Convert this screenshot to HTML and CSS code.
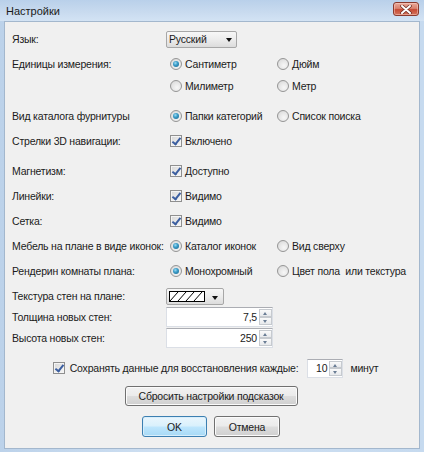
FILE: index.html
```html
<!DOCTYPE html>
<html lang="ru">
<head>
<meta charset="utf-8">
<title>Настройки</title>
<link rel="stylesheet" href="styles.css">
</head>
<body>
<div class="window">
  <div class="titlebar">
    <span class="title">Настройки</span>
    <button class="close" aria-label="Закрыть">
      <svg width="12" height="9" viewBox="0 0 12 9">
        <path d="M2 1 L10 8 M10 1 L2 8" stroke="#6b2a22" stroke-width="3.4" stroke-linecap="round"/>
        <path d="M2 1 L10 8 M10 1 L2 8" stroke="#ffffff" stroke-width="2" stroke-linecap="round"/>
      </svg>
    </button>
  </div>

  <div class="content">
    <div class="row">
      <span class="label">Язык:</span>
      <div class="combo lang">
        <span class="combo-text">Русский</span>
        <i class="arrow"></i>
      </div>
    </div>

    <div class="row">
      <span class="label">Единицы измерения:</span>
      <label class="opt"><span class="radio on"></span>Сантиметр</label>
      <label class="opt"><span class="radio"></span>Дюйм</label>
    </div>
    <div class="row sub">
      <span class="label"></span>
      <label class="opt"><span class="radio"></span>Милиметр</label>
      <label class="opt"><span class="radio"></span>Метр</label>
    </div>

    <div class="row group">
      <span class="label">Вид каталога фурнитуры</span>
      <label class="opt"><span class="radio on"></span>Папки категорий</label>
      <label class="opt"><span class="radio"></span>Список поиска</label>
    </div>
    <div class="row">
      <span class="label">Стрелки 3D навигации:</span>
      <label class="opt"><span class="check on"></span>Включено</label>
    </div>

    <div class="row group">
      <span class="label">Магнетизм:</span>
      <label class="opt"><span class="check on"></span>Доступно</label>
    </div>
    <div class="row">
      <span class="label">Линейки:</span>
      <label class="opt"><span class="check on"></span>Видимо</label>
    </div>
    <div class="row">
      <span class="label">Сетка:</span>
      <label class="opt"><span class="check on"></span>Видимо</label>
    </div>
    <div class="row">
      <span class="label">Мебель на плане в виде иконок:</span>
      <label class="opt"><span class="radio on"></span>Каталог иконок</label>
      <label class="opt"><span class="radio"></span>Вид сверху</label>
    </div>
    <div class="row">
      <span class="label">Рендерин комнаты плана:</span>
      <label class="opt"><span class="radio on"></span>Монохромный</label>
      <label class="opt"><span class="radio"></span>Цвет пола&nbsp; или текстура</label>
    </div>
    <div class="row">
      <span class="label">Текстура стен на плане:</span>
      <div class="combo texture">
        <svg class="hatch" width="36" height="11" viewBox="0 0 36 11">
          <rect x="0.5" y="0.5" width="35" height="10" fill="#fff" stroke="#000"/>
          <path d="M1 10 L9 1 M9 10 L17 1 M17 10 L25 1 M25 10 L33 1" stroke="#000" stroke-width="1"/>
        </svg>
        <i class="arrow"></i>
      </div>
    </div>
    <div class="row field">
      <span class="label">Толщина новых стен:</span>
      <div class="spin wide">
        <span class="spin-value">7,5</span>
        <span class="spin-buttons"><i class="up"></i><i class="down"></i></span>
      </div>
    </div>
    <div class="row field">
      <span class="label">Высота новых стен:</span>
      <div class="spin wide">
        <span class="spin-value">250</span>
        <span class="spin-buttons"><i class="up"></i><i class="down"></i></span>
      </div>
    </div>

    <div class="row group autosave">
      <label class="opt"><span class="check on"></span>Сохранять данные для восстановления каждые:</label>
      <div class="spin small">
        <span class="spin-value">10</span>
        <span class="spin-buttons"><i class="up"></i><i class="down"></i></span>
      </div>
      <span class="unit">минут</span>
    </div>

    <div class="actions">
      <button class="btn reset">Сбросить настройки подсказок</button>
    </div>
    <div class="actions pair">
      <button class="btn default">OK</button>
      <button class="btn">Отмена</button>
    </div>
  </div>
</div>
</body>
</html>
```

FILE: styles.css
```css
* {
  box-sizing: border-box;
}

html, body {
  margin: 0;
  padding: 0;
}

body {
  font-family: "Liberation Sans", Arial, sans-serif;
  font-size: 10.5px;
  letter-spacing: -0.2px;
  color: #1b1b1b;
  background: #c9dcf0;
}

.window {
  width: 424px;
  height: 452px;
  display: flex;
  flex-direction: column;
  background: linear-gradient(90deg, #bcd2ea, #cfe0f2 40%, #c6daef);
}

/* caption */
.titlebar {
  height: 21px;
  flex: none;
  display: flex;
  align-items: center;
  padding: 0 5px 0 6px;
  background: linear-gradient(180deg, #b9d0ea 0%, #c9dbef 60%, #d3e3f4 100%);
}

.title {
  flex: 1;
  font-family: "Liberation Sans", Arial, sans-serif;
  font-size: 11px;
  letter-spacing: 0;
  color: #1a1a1a;
  padding-top: 1px;
}

.close {
  width: 26px;
  height: 14px;
  margin-top: -3px;
  padding: 0;
  border: 1px solid #8a3a2e;
  border-radius: 3px;
  display: flex;
  align-items: center;
  justify-content: center;
  background: linear-gradient(180deg, #e9a99a 0%, #d9826f 45%, #c74a34 55%, #d3745c 100%);
  box-shadow: inset 0 0 0 1px rgba(255, 220, 210, 0.45);
}

/* client area */
.content {
  flex: 1;
  margin: 0 4px 3px 4px;
  border: 1px solid #a3b7cd;
  background: #f0f0f0;
  padding: 7px 0 0 7px;
  display: flex;
  flex-direction: column;
}

.row {
  height: 20px;
  display: flex;
  align-items: center;
  margin-top: 5px;
  white-space: nowrap;
}

.row:first-child {
  margin-top: 0;
}

.row.sub {
  margin-top: 2px;
}

.row.group {
  margin-top: 10px;
}

.row.field {
  margin-top: 1px;
}

.label {
  width: 154px;
  flex: none;
}

.opt {
  display: flex;
  align-items: center;
  gap: 3px;
  margin-left: 4px;
  width: 107px;
  flex: none;
}

.opt + .opt {
  margin-left: 0;
  width: auto;
}

/* radio button */
.radio {
  width: 12px;
  height: 12px;
  flex: none;
  border-radius: 50%;
  border: 1px solid #959595;
  background: radial-gradient(circle at 60% 65%, #f7f7f7 0%, #e3e3e3 60%, #cfcfcf 100%);
  position: relative;
}

.radio.on::after {
  content: "";
  position: absolute;
  left: 2px;
  top: 2px;
  width: 6px;
  height: 6px;
  border-radius: 50%;
  background: radial-gradient(circle at 40% 35%, #9fdcf3 0%, #3a9cc8 40%, #19628a 100%);
}

/* check box */
.check {
  width: 12px;
  height: 12px;
  flex: none;
  border: 1px solid #8f8f8f;
  background: linear-gradient(135deg, #d7d7d7, #f7f7f7);
  box-shadow: inset 0 0 0 1px #f4f4f4;
  position: relative;
}

.check.on::after {
  content: "";
  position: absolute;
  left: 3px;
  top: 0px;
  width: 3px;
  height: 7px;
  border: solid #3b5ea0;
  border-width: 0 2px 2px 0;
  transform: rotate(38deg);
}

/* drop-down */
.combo {
  height: 17px;
  display: flex;
  align-items: center;
  border: 1px solid #a7a7a7;
  border-radius: 2px;
  background: linear-gradient(180deg, #f7f7f7 0%, #ececec 50%, #dcdcdc 100%);
}

.combo.lang {
  width: 71px;
  padding: 0 4px 0 2px;
}

.combo-text {
  flex: 1;
}

.combo.texture {
  width: 58px;
  padding: 0 5px 0 2px;
  margin-top: 1px;
}

.hatch {
  flex: none;
  margin-right: auto;
}

.arrow {
  width: 0;
  height: 0;
  border-left: 3.5px solid transparent;
  border-right: 3.5px solid transparent;
  border-top: 4px solid #111;
  margin-top: 2px;
}

/* number field */
.spin {
  height: 20px;
  display: flex;
  align-items: stretch;
  background: #fff;
  border: 1px solid #dbdfe6;
  border-top-color: #abadb3;
}

.spin.wide {
  width: 107px;
}

.spin.small {
  width: 36px;
  height: 19px;
  margin-left: 9px;
}

.spin-value {
  flex: 1;
  text-align: right;
  padding-right: 2px;
  align-self: center;
}

.spin-buttons {
  width: 13px;
  flex: none;
  display: flex;
  flex-direction: column;
  padding: 1px 0;
}

.spin-buttons i {
  flex: 1;
  position: relative;
  border: 1px solid #c6cacf;
  background: linear-gradient(180deg, #fafafa, #e7e9ec);
}

.spin-buttons i::after {
  content: "";
  position: absolute;
  left: 3px;
  top: 2px;
  border-left: 2.5px solid transparent;
  border-right: 2.5px solid transparent;
}

.spin-buttons .up::after {
  border-bottom: 3px solid #6a7d95;
}

.spin-buttons .down::after {
  border-top: 3px solid #6a7d95;
  top: 2px;
}

/* autosave line */
.autosave {
  justify-content: center;
}

.autosave .opt {
  width: auto;
  margin-left: 0;
  gap: 5px;
}

.unit {
  margin-left: 7px;
}

/* buttons */
.actions {
  display: flex;
  justify-content: center;
  gap: 7px;
  margin-top: 8px;
  padding-right: 9px;
}

.actions.pair {
  margin-top: 10px;
}

.btn {
  font: inherit;
  letter-spacing: inherit;
  color: #1b1b1b;
  height: 21px;
  width: 66px;
  padding: 0;
  border: 1px solid #707070;
  border-radius: 3px;
  background: linear-gradient(180deg, #f2f2f2 0%, #ebebeb 48%, #dddddd 52%, #cfcfcf 100%);
  box-shadow: inset 0 0 0 1px #fbfbfb;
}

.btn.reset {
  width: 173px;
  height: 20px;
}

.btn.default {
  width: 65px;
  border-color: #3c7fb1;
  background: linear-gradient(180deg, #eaf6fd 0%, #d9f0fc 48%, #bee6fd 52%, #a7d9f5 100%);
  box-shadow: inset 0 0 0 1px #d8eefb;
}
```
